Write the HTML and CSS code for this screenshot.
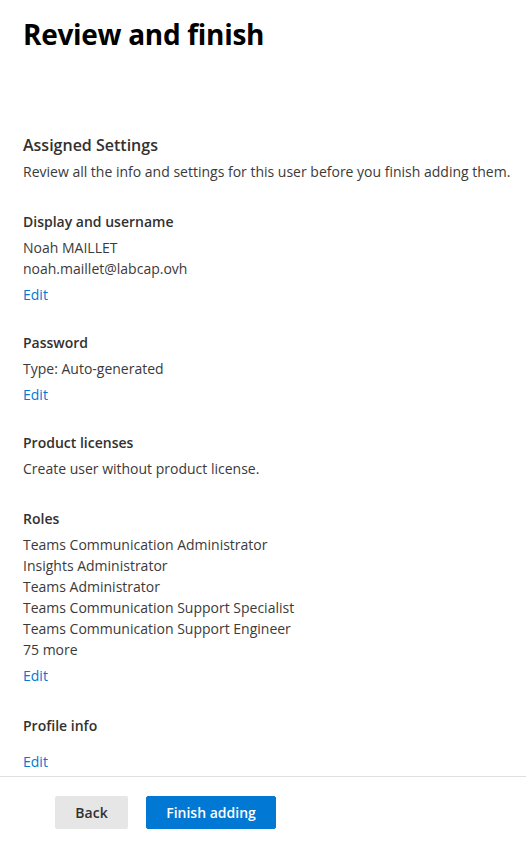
FILE: index.html
```html
<!DOCTYPE html>
<html lang="en">
<head>
<meta charset="utf-8">
<title>Review and finish</title>
<link rel="stylesheet" href="styles.css">
</head>
<body>
<div class="page">
  <main class="content">
    <h1 class="title">Review and finish</h1>
    <h2 class="subtitle">Assigned Settings</h2>
    <p class="desc">Review all the info and settings for this user before you finish adding them.</p>

    <section class="section">
      <h3 class="heading">Display and username</h3>
      <div class="line">Noah MAILLET</div>
      <div class="line">noah.maillet@labcap.ovh</div>
      <a class="edit" href="#">Edit</a>
    </section>

    <section class="section">
      <h3 class="heading">Password</h3>
      <div class="line">Type: Auto-generated</div>
      <a class="edit" href="#">Edit</a>
    </section>

    <section class="section">
      <h3 class="heading">Product licenses</h3>
      <div class="line">Create user without product license.</div>
    </section>

    <section class="section section-wide">
      <h3 class="heading">Roles</h3>
      <div class="line">Teams Communication Administrator</div>
      <div class="line">Insights Administrator</div>
      <div class="line">Teams Administrator</div>
      <div class="line">Teams Communication Support Specialist</div>
      <div class="line">Teams Communication Support Engineer</div>
      <div class="line">75 more</div>
      <a class="edit" href="#">Edit</a>
    </section>

    <section class="section section-wide">
      <h3 class="heading">Profile info</h3>
      <div class="empty"></div>
      <a class="edit" href="#">Edit</a>
    </section>
  </main>
  <footer class="footer">
    <button class="btn btn-back" type="button">Back</button>
    <button class="btn btn-primary" type="button">Finish adding</button>
  </footer>
</div>
</body>
</html>
```
FILE: styles.css
```css
* { box-sizing: border-box; }
html, body { margin: 0; padding: 0; background: #ffffff; }
body {
  font-family: "Open Sans", "Noto Sans", "Liberation Sans", sans-serif;
  color: #323130;
  font-size: 14px;
}
.page {
  display: flex;
  flex-direction: column;
  width: 526px;
  height: 843px;
  overflow: hidden;
}
.content {
  flex: 1 1 auto;
  min-height: 0;
  overflow: hidden;
  padding: 16px 0 0 23px;
}
.title {
  margin: 0;
  font-size: 28px;
  line-height: 36px;
  font-weight: 700;
  color: #000000;
  letter-spacing: -0.3px;
}
.subtitle {
  margin: 82px 0 0 0;
  font-size: 16px;
  line-height: 22px;
  font-weight: 600;
  color: #323130;
}
.desc {
  margin: 6px 0 0 0;
  font-size: 14px;
  line-height: 20px;
  color: #3b3a39;
}
.section {
  display: flex;
  flex-direction: column;
  align-items: flex-start;
  margin-top: 30px;
}
.section + .section { margin-top: 28.5px; }
.section + .section-wide { margin-top: 30.5px; }
.heading {
  margin: 0 0 4.5px 0;
  font-size: 14px;
  line-height: 20px;
  font-weight: 600;
  color: #323130;
}
.line {
  font-size: 14px;
  line-height: 21px;
  color: #3b3a39;
}
.edit {
  margin-top: 5px;
  font-size: 14px;
  line-height: 21px;
  color: #0078d4;
  text-decoration: none;
}
.empty { height: 5px; }
.footer {
  flex: 0 0 67px;
  display: flex;
  gap: 18px;
  border-top: 1px solid #e1dfdd;
  padding: 19px 0 0 55px;
}
.btn {
  height: 33px;
  border-radius: 2px;
  font-family: inherit;
  font-size: 14px;
  font-weight: 600;
  border: 1px solid transparent;
  padding: 0;
  cursor: pointer;
}
.btn-back {
  width: 73px;
  background: #e6e6e6;
  color: #323130;
}
.btn-primary {
  width: 130px;
  background: #0078d4;
  border-color: #0078d4;
  color: #ffffff;
}
```
